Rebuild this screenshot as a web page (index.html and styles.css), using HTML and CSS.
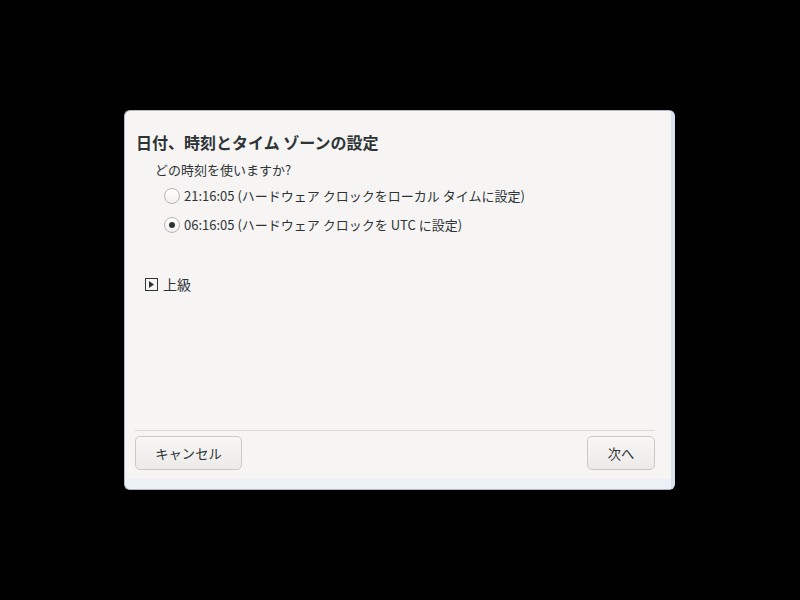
FILE: index.html
```html
<!DOCTYPE html>
<html lang="ja">
<head>
<meta charset="utf-8">
<title>日付、時刻とタイム ゾーンの設定</title>
<link rel="stylesheet" href="styles.css">
</head>
<body>
<div class="dialog">
  <div class="main">
    <h1 class="title">日付、時刻とタイム ゾーンの設定</h1>
    <p class="question">どの時刻を使いますか?</p>
    <div class="options">
      <label class="option"><span class="radio"></span><span>21:16:05 (ハードウェア クロックをローカル タイムに設定)</span></label>
      <label class="option"><span class="radio checked"></span><span>06:16:05 (ハードウェア クロックを UTC に設定)</span></label>
    </div>
    <div class="expander">
      <span class="exp-box"><svg width="9" height="9" viewBox="0 0 9 9"><path d="M2 1 L7 4.5 L2 8 Z" fill="#2e3436"/></svg></span>
      <span>上級</span>
    </div>
  </div>
  <div class="footer">
    <button class="btn btn-cancel">キャンセル</button>
    <button class="btn btn-next">次へ</button>
  </div>
  <div class="strip"></div>
</div>
</body>
</html>
```
FILE: styles.css
```css
html, body {
  margin: 0;
  padding: 0;
  background: #000;
}
body {
  height: 100vh;
  display: flex;
  align-items: center;
  font-family: "Noto Sans CJK JP", "Noto Sans", sans-serif;
  color: #2e3436;
}
.dialog {
  box-sizing: border-box;
  width: 551px;
  height: 380px;
  margin-left: 124px;
  border: 1px solid #aeb9c6;
  border-right: 4px solid #d6e1ec;
  border-radius: 6px;
  background: #f6f5f4;
  display: flex;
  flex-direction: column;
  overflow: hidden;
}
.main {
  flex: 1;
  padding: 20px 11px 0 11px;
}
.title {
  margin: 0;
  font-size: 16px;
  font-weight: bold;
  line-height: 22px;
}
.question {
  margin: 7px 0 0 19px;
  font-size: 13px;
  line-height: 20px;
}
.options {
  margin: 6px 0 0 28px;
  display: flex;
  flex-direction: column;
  gap: 9px;
}
.option {
  display: flex;
  align-items: center;
  gap: 4px;
  font-size: 13px;
  line-height: 20px;
}
.radio {
  box-sizing: border-box;
  width: 16px;
  height: 16px;
  border-radius: 50%;
  border: 1px solid #b7b4b0;
  background: linear-gradient(#ffffff, #f1f0ee);
  display: flex;
  align-items: center;
  justify-content: center;
}
.radio.checked::after {
  content: "";
  width: 6px;
  height: 6px;
  border-radius: 50%;
  background: #2e3436;
}
.expander {
  margin: 39px 0 0 9px;
  display: flex;
  align-items: center;
  gap: 5px;
  font-size: 14px;
  line-height: 20px;
}
.exp-box {
  box-sizing: border-box;
  width: 13px;
  height: 13px;
  border: 1px solid #2e3436;
  display: flex;
  align-items: center;
  justify-content: center;
}
.footer {
  margin: 0 16px 0 10px;
  border-top: 1px solid #dcdad7;
  padding: 5px 0 9px 0;
  display: flex;
  justify-content: space-between;
}
.btn {
  box-sizing: border-box;
  height: 34px;
  border: 1px solid #cdc8c3;
  border-radius: 5px;
  background: linear-gradient(#f8f7f6, #edebe9);
  font-family: "Noto Sans CJK JP", "Noto Sans", sans-serif;
  font-size: 13.33px;
  color: #2e3436;
  padding: 0;
}
.btn-cancel { width: 107px; }
.btn-next { width: 68px; }
.strip {
  height: 10px;
  background: #edf1f6;
}
```
